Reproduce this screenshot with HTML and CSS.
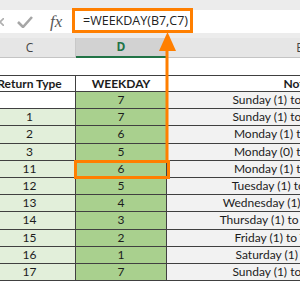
FILE: index.html
```html
<!DOCTYPE html>
<html lang="en">
<head>
    <meta charset="UTF-8">
    <title>WEEKDAY function</title>
    <link rel="stylesheet" href="styles.css">
</head>
<body>
    <div class="formula-bar">
        <div class="fx-buttons">
            <svg class="btn-cancel" width="8" height="8" viewBox="0 0 8 8">
                <path d="M0 0 L8 8 M8 0 L0 8" stroke="#b0b0b0" stroke-width="1.6"/>
            </svg>
            <svg class="btn-ok" width="16" height="12" viewBox="0 0 16 12">
                <path d="M1 6 L6 11 L15 1" fill="none" stroke="#a6a6a6" stroke-width="2.6"/>
            </svg>
            <span class="btn-fx">fx</span>
        </div>
        <div class="formula">=WEEKDAY(B7,C7)</div>
        <div class="formula-rest"></div>
    </div>

    <div class="col-headers">
        <div class="col-head">C</div>
        <div class="col-head selected">D</div>
        <div class="col-head">E</div>
    </div>

    <div class="sheet">
        <div class="blank-row"></div>
        <div class="row head-row">
            <div class="cell">Return Type</div>
            <div class="cell">WEEKDAY</div>
            <div class="cell">Notes</div>
        </div>
        <div class="row">
            <div class="cell type blank"></div>
            <div class="cell result">7</div>
            <div class="cell note">Sunday (1) to Saturday (7)</div>
        </div>
        <div class="row">
            <div class="cell type">1</div>
            <div class="cell result">7</div>
            <div class="cell note">Sunday (1) to Saturday (7)</div>
        </div>
        <div class="row">
            <div class="cell type">2</div>
            <div class="cell result">6</div>
            <div class="cell note">Monday (1) to Sunday (7)</div>
        </div>
        <div class="row">
            <div class="cell type">3</div>
            <div class="cell result">5</div>
            <div class="cell note">Monday (0) to Sunday (6)</div>
        </div>
        <div class="row">
            <div class="cell type">11</div>
            <div class="cell result">6</div>
            <div class="cell note">Monday (1) to Sunday (7)</div>
        </div>
        <div class="row">
            <div class="cell type">12</div>
            <div class="cell result">5</div>
            <div class="cell note">Tuesday (1) to Monday (7)</div>
        </div>
        <div class="row">
            <div class="cell type">13</div>
            <div class="cell result">4</div>
            <div class="cell note">Wednesday (1) to Tuesday (7)</div>
        </div>
        <div class="row">
            <div class="cell type">14</div>
            <div class="cell result">3</div>
            <div class="cell note">Thursday (1) to Wednesday (7)</div>
        </div>
        <div class="row">
            <div class="cell type">15</div>
            <div class="cell result">2</div>
            <div class="cell note">Friday (1) to Thursday (7)</div>
        </div>
        <div class="row">
            <div class="cell type">16</div>
            <div class="cell result">1</div>
            <div class="cell note">Saturday (1) to Friday (7)</div>
        </div>
        <div class="row">
            <div class="cell type">17</div>
            <div class="cell result">7</div>
            <div class="cell note">Sunday (1) to Saturday (7)</div>
        </div>
    </div>

    <!-- callout from the selected cell up to the formula -->
    <svg class="callout" width="300" height="300" viewBox="0 0 300 300">
        <rect x="75.5" y="161.5" width="93" height="16" fill="none" stroke="#ff7f00" stroke-width="3"/>
        <line x1="167" y1="160" x2="167" y2="48" stroke="#ff7f00" stroke-width="3"/>
        <polygon points="167.5,32 159,51 176,51" fill="#ff7f00"/>
    </svg>
</body>
</html>
```

FILE: styles.css
```css
body {
    margin: 0;
    width: 300px;
    height: 300px;
    overflow: hidden;
    position: relative;
    background: #fff;
    font-family: Lato, "Open Sans", sans-serif;
    color: #1c1c1c;
}

.formula-bar {
    display: flex;
    align-items: flex-end;
    height: 33px;
    padding-bottom: 5px;
    background: #ececec;
}

.fx-buttons {
    display: flex;
    align-items: center;
    width: 72px;
    height: 23px;
    background: #fff;
}

.btn-cancel {
    margin-left: -4px;
}

.btn-ok {
    margin-left: 13px;
}

.btn-fx {
    margin-left: 17px;
    font-family: "Liberation Serif", serif;
    font-style: italic;
    font-size: 17px;
    color: #595959;
    line-height: 20px;
}

.formula {
    width: 121px;
    height: 25px;
    box-sizing: border-box;
    border: 3px solid #ff7f00;
    background: #fff;
    padding-left: 8px;
    font-family: "Open Sans", sans-serif;
    font-size: 12.5px;
    line-height: 19px;
    color: #222;
    white-space: nowrap;
}

.formula-rest {
    flex: 1;
    height: 23px;
    background: #fff;
}

.col-headers {
    display: grid;
    grid-template-columns: 92px 91px 266px;
    margin-left: -16px;
    height: 19px;
    background: #e6e6e6;
    border-bottom: 1px solid #c4c4c4;
}

.col-head {
    border-right: 1px solid #c8c8c8;
    text-align: center;
    font-family: "Open Sans", sans-serif;
    font-size: 12px;
    line-height: 19px;
    color: #444;
}

.col-head.selected {
    background: #d2d2d2;
    color: #217346;
    font-weight: bold;
    border-bottom: 2px solid #217346;
    line-height: 18px;
}

.sheet {
    margin-left: -16px;
}

.blank-row {
    height: 17px;
}

.row {
    display: grid;
    grid-template-columns: 92px 91px 266px;
    height: 17.2px;
    box-sizing: border-box;
    border-bottom: 1px solid #404040;
}

.head-row {
    height: 17px;
    border-top: 1px solid #404040;
    font-weight: bold;
}

.cell {
    border-right: 1px solid #404040;
    text-align: center;
    font-size: 12px;
    line-height: 16px;
    white-space: nowrap;
    overflow: hidden;
}

.type {
    background: #e2efda;
}

.type.blank {
    background: #fff;
}

.result {
    background: #a9d08e;
}

.note {
    background: #f2f2f2;
}

.callout {
    position: absolute;
    top: 0;
    left: 0;
    pointer-events: none;
}
```
